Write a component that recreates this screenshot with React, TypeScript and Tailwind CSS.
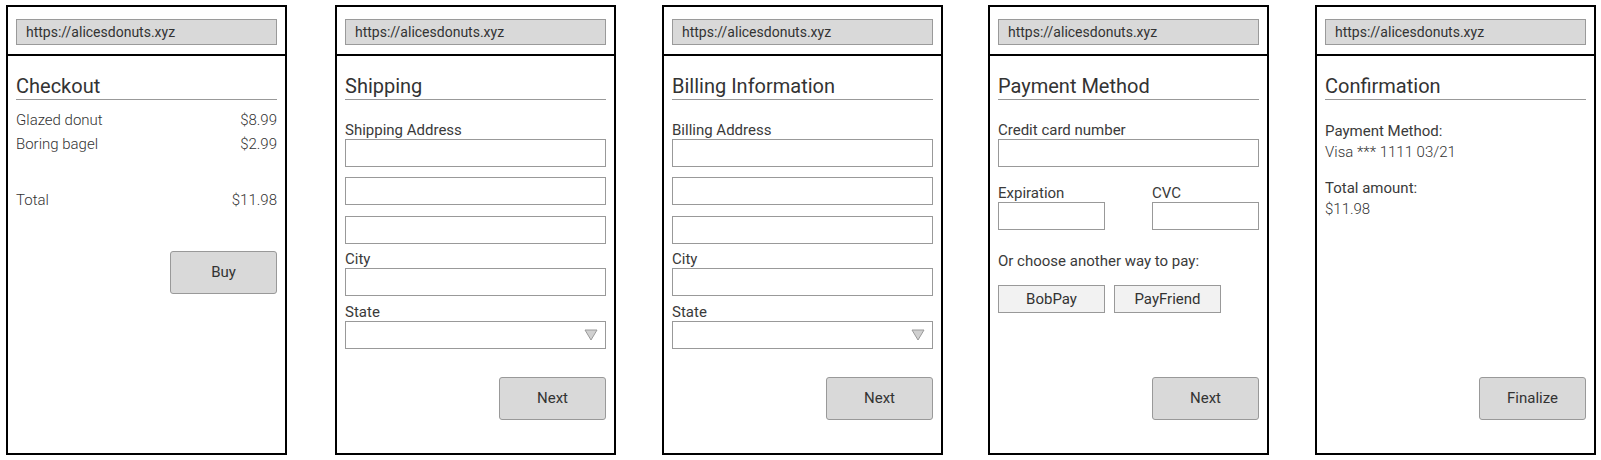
import React from "react";

const font = { fontFamily: "Roboto, 'Liberation Sans', sans-serif" };

function Panel({ title, className, children }: { title: string; className: string; children: React.ReactNode }) {
  return (
    <div className={`w-[281px] h-[450px] shrink-0 border-2 border-black flex flex-col bg-white ${className}`}>
      <div className="h-[49px] border-b-2 border-black px-[8px] pt-[12px]">
        <div className="h-[26px] border border-[#9a9a9a] bg-[#d9d9d9] pl-[9px] text-[14px] leading-[24px] text-[#333]">
          https://alicesdonuts.xyz
        </div>
      </div>
      <div className="flex-1 flex flex-col px-[8px]">
        <div className="pt-[18px] h-[44px] leading-[25px] text-[20px] text-[#333] border-b border-[#999]">{title}</div>
        {children}
      </div>
    </div>
  );
}

function Input({ className = "" }: { className?: string }) {
  return <div className={`h-[28px] border border-[#999] bg-white ${className}`} />;
}

function Label({ children, className = "" }: { children: React.ReactNode; className?: string }) {
  return <div className={`text-[15px] leading-[18px] text-[#3a3a3a] ${className}`}>{children}</div>;
}

function BigButton({ children, className = "" }: { children: React.ReactNode; className?: string }) {
  return (
    <div className={`self-end w-[107px] h-[43px] rounded-[3px] border border-[#999] bg-[#d9d9d9] flex items-center justify-center text-[15px] font-normal text-[#333] ${className}`}>
      {children}
    </div>
  );
}

function Select() {
  return (
    <div className="h-[28px] border border-[#999] bg-white flex items-center justify-end pr-[7px]">
      <svg width="14" height="12" viewBox="0 0 14 12">
        <polygon points="1,1 13,1 7,11" fill="#d0d0d0" stroke="#9a9a9a" strokeWidth="1" />
      </svg>
    </div>
  );
}

function AddressForm({ label }: { label: string }) {
  return (
    <>
      <Label className="mt-[21px]">{label}</Label>
      <Input />
      <Input className="mt-[10px]" />
      <Input className="mt-[11px]" />
      <Label className="mt-[6px]">City</Label>
      <Input />
      <Label className="mt-[7px]">State</Label>
      <Select />
      <BigButton className="mt-auto mb-[33px]">Next</BigButton>
    </>
  );
}

export default function App() {
  return (
    <div className="h-[460px] w-[1601px] bg-white flex pt-[5px] pl-[6px] overflow-hidden" style={font}>
      <Panel title="Checkout" className="">
        <div className="mt-[8px] flex justify-between text-[15px] leading-[24px] font-light text-[#333]">
          <span>Glazed donut</span>
          <span>$8.99</span>
        </div>
        <div className="flex justify-between text-[15px] leading-[24px] font-light text-[#333]">
          <span>Boring bagel</span>
          <span>$2.99</span>
        </div>
        <div className="mt-[32px] flex justify-between text-[15px] leading-[24px] font-light text-[#333]">
          <span>Total</span>
          <span>$11.98</span>
        </div>
        <BigButton className="mt-[39px]">Buy</BigButton>
      </Panel>

      <Panel title="Shipping" className="ml-[48px]">
        <AddressForm label="Shipping Address" />
      </Panel>

      <Panel title="Billing Information" className="ml-[46px]">
        <AddressForm label="Billing Address" />
      </Panel>

      <Panel title="Payment Method" className="ml-[45px]">
        <Label className="mt-[21px]">Credit card number</Label>
        <Input />
        <div className="mt-[17px] flex justify-between">
          <div className="w-[107px]">
            <Label>Expiration</Label>
            <Input />
          </div>
          <div className="w-[107px]">
            <Label>CVC</Label>
            <Input />
          </div>
        </div>
        <Label className="mt-[22px]">Or choose another way to pay:</Label>
        <div className="mt-[15px] flex gap-[9px]">
          <div className="w-[107px] h-[28px] border border-[#999] bg-[#f2f2f2] flex items-center justify-center text-[15px] text-[#333]">BobPay</div>
          <div className="w-[107px] h-[28px] border border-[#999] bg-[#f2f2f2] flex items-center justify-center text-[15px] text-[#333]">PayFriend</div>
        </div>
        <BigButton className="mt-auto mb-[33px]">Next</BigButton>
      </Panel>

      <Panel title="Confirmation" className="ml-[46px]">
        <div className="mt-[21px] text-[15px] leading-[21px] text-[#3a3a3a]">Payment Method:</div>
        <div className="text-[15px] leading-[21px] font-light text-[#333]">Visa *** 1111 03/21</div>
        <div className="mt-[15px] text-[15px] leading-[21px] text-[#3a3a3a]">Total amount:</div>
        <div className="text-[15px] leading-[21px] font-light text-[#333]">$11.98</div>
        <BigButton className="mt-auto mb-[33px]">Finalize</BigButton>
      </Panel>
    </div>
  );
}
